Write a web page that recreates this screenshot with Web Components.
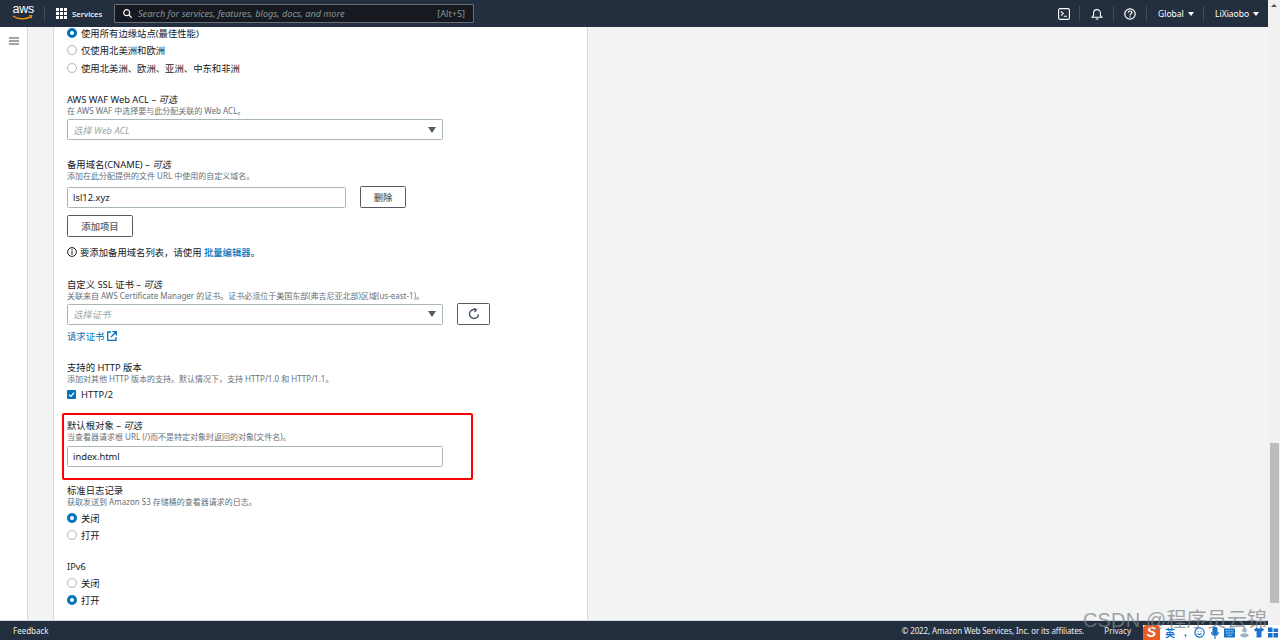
<!DOCTYPE html>
<html lang="zh">
<head>
<meta charset="utf-8">
<title>CloudFront</title>
<style>
    html, body {
        margin: 0;
        padding: 0;
        height: 640px;
        overflow: hidden;
        font-family: "Noto Sans", "Noto Sans CJK SC", sans-serif;
        font-size: 9.35px;
        color: #16191f;
    }
    body {
        display: flex;
        position: relative;
    }
</style>
</head>
<body>
<aws-console></aws-console>
<page-scrollbar></page-scrollbar>
<ime-overlay></ime-overlay>

<script>
const FONT = `"Noto Sans", "Noto Sans CJK SC", sans-serif`;

class AwsHeader extends HTMLElement {
    constructor() {
        super();
        this.attachShadow({ mode: 'open' }).innerHTML = `
            <style>
                :host {
                    display: flex;
                    align-items: center;
                    height: 27px;
                    flex: none;
                    background: #232f3e;
                    color: #fff;
                    font-family: ${FONT};
                    font-size: 8.5px;
                }
                .logo { position: relative; width: 44px; height: 27px; flex: none; }
                .logo span {
                    position: absolute; left: 12.5px; top: 2px;
                    font: 400 12.5px/15px "Liberation Sans", sans-serif;
                    letter-spacing: -0.3px;
                }
                .logo svg { position: absolute; left: 12px; top: 15px; }
                .div { width: 1px; height: 15px; background: #414d5c; flex: none; }
                .services { display: flex; align-items: center; gap: 5px; margin-left: 11px; width: 57px; flex: none; font-size: 7.8px; font-weight: 500; }
                .search {
                    width: 360px; height: 19px; box-sizing: border-box; flex: none;
                    margin-left: 1px;
                    display: flex; align-items: center;
                    background: #16191f; border: 1px solid #687078; border-radius: 1px;
                    padding: 0 8px 0 8px;
                    color: #879596; font-size: 9.15px; font-style: italic;
                }
                .search svg { margin-right: 6px; flex: none; }
                .search span { flex: 1; }
                .search b { font-weight: 400; font-style: normal; }
                .right { margin-left: auto; display: flex; align-items: center; height: 27px; }
                .ic { width: 33px; display: flex; justify-content: center; box-sizing: border-box; }
                .menu { display: flex; align-items: center; gap: 4px; box-sizing: border-box; padding-left: 11px; }
                .caret { width: 0; height: 0; border: 3px solid transparent; border-top: 4px solid #fff; border-bottom: 0; }
            </style>
            <div class="logo">
                <span>aws</span>
                <svg width="22" height="6" viewBox="0 0 22 6" fill="none">
                    <path d="M1 1C6 4.6 14 4.6 19 1.6" stroke="#f90" stroke-width="1.3"/>
                    <path d="M17 .8l3-.3-.8 3" stroke="#f90" stroke-width="1"/>
                </svg>
            </div>
            <div class="div"></div>
            <div class="services">
                <svg width="11" height="11" viewBox="0 0 11 11" fill="#fff">
                    <path d="M0 0h3v3H0zM4 0h3v3H4zM8 0h3v3H8zM0 4h3v3H0zM4 4h3v3H4zM8 4h3v3H8zM0 8h3v3H0zM4 8h3v3H4zM8 8h3v3H8z"/>
                </svg>
                <span>Services</span>
            </div>
            <div class="search">
                <svg width="9" height="9" viewBox="0 0 9 9" fill="none" stroke="#fff" stroke-width="1.2">
                    <circle cx="3.7" cy="3.7" r="3"/><path d="M6 6l2.8 2.8"/>
                </svg>
                <span>Search for services, features, blogs, docs, and more</span>
                <b>[Alt+S]</b>
            </div>
            <div class="right">
                <div class="ic" style="padding-left:2px">
                    <svg width="12" height="12" viewBox="0 0 12 12" fill="none" stroke="#fff" stroke-width="1.1">
                        <rect x=".6" y=".6" width="10.8" height="10.8" rx="1.5"/>
                        <path d="M3 3.5L5.3 5.6 3 7.7M5.8 8.2h3"/>
                    </svg>
                </div>
                <div class="div"></div>
                <div class="ic">
                    <svg width="12" height="12" viewBox="0 0 12 12" fill="none" stroke="#fff" stroke-width="1.1">
                        <path d="M1 9.3h10L9.4 7.3V5a3.4 3.4 0 0 0-6.8 0v2.3zM4.8 10.6c.6.8 1.8.8 2.4 0"/>
                    </svg>
                </div>
                <div class="div"></div>
                <div class="ic" style="width:32px">
                    <svg width="12" height="12" viewBox="0 0 12 12" fill="none" stroke="#fff" stroke-width="1.2">
                        <circle cx="6" cy="6" r="5.2"/>
                        <path d="M4.2 4.6C4.3 2.4 7.9 2.5 7.9 4.5 7.9 5.9 6 5.8 6 7.5M6 8.2v1.3"/>
                    </svg>
                </div>
                <div class="div"></div>
                <div class="menu" style="width:56px">Global <i class="caret"></i></div>
                <div class="div"></div>
                <div class="menu" style="width:64px">LiXiaobo <i class="caret"></i></div>
            </div>
        `;
    }
}

class AwsFooter extends HTMLElement {
    constructor() {
        super();
        this.attachShadow({ mode: 'open' }).innerHTML = `
            <style>
                :host {
                    display: flex;
                    align-items: center;
                    justify-content: space-between;
                    height: 19px;
                    flex: none;
                    background: #232f3e;
                    color: #eaeded;
                    font-family: ${FONT};
                    font-size: 8px;
                    padding: 0 137px 0 13px;
                    border-top: 1px solid #d5dbdb;
                }
                .r { display: flex; gap: 20px; }
                .c { letter-spacing: -0.11px; }
            </style>
            <span>Feedback</span>
            <div class="r"><span class="c">© 2022, Amazon Web Services, Inc. or its affiliates.</span><span>Privacy</span></div>
        `;
    }
}

class SideNav extends HTMLElement {
    constructor() {
        super();
        this.attachShadow({ mode: 'open' }).innerHTML = `
            <style>
                :host {
                    display: block;
                    width: 27px;
                    flex: none;
                    background: #fff;
                    border-right: 1px solid #d5dbdb;
                    box-sizing: content-box;
                }
                svg { display: block; margin: 10px 0 0 9px; }
            </style>
            <svg width="10" height="8" viewBox="0 0 10 8" fill="none" stroke="#414d5c" stroke-width="1.2">
                <path d="M0 1h10M0 4h10M0 7h10"/>
            </svg>
        `;
    }
}

class FormField extends HTMLElement {
    constructor() {
        super();
        this.attachShadow({ mode: 'open' }).innerHTML = `
            <style>
                :host { display: block; }
                .label { line-height: 11px; height: 11px; color: #16191f; white-space: nowrap; }
                .label i { font-style: italic; }
                .desc { line-height: 12px; height: 12px; font-size: 8px; color: #687078; white-space: nowrap; }
                .desc:empty { display: none; }
                .body { margin-top: var(--control-gap, 2px); }
            </style>
            <div class="label"></div>
            <div class="desc"></div>
            <div class="body"><slot></slot></div>
        `;
    }

    connectedCallback() {
        const label = this.shadowRoot.querySelector('.label');
        label.textContent = this.getAttribute('label');
        if (this.hasAttribute('optional')) {
            const opt = document.createElement('i');
            opt.textContent = '可选';
            label.append(' – ', opt);
        }
        this.shadowRoot.querySelector('.desc').textContent = this.getAttribute('desc') || '';
    }
}

class RadioRow extends HTMLElement {
    constructor() {
        super();
        this.attachShadow({ mode: 'open' }).innerHTML = `
            <style>
                :host {
                    display: flex;
                    align-items: center;
                    gap: 4px;
                    height: 17.4px;
                    color: #16191f;
                    white-space: nowrap;
                }
                .dot {
                    width: 10px; height: 10px; border-radius: 50%; flex: none;
                    box-sizing: border-box; background: #fff;
                    border: 1px solid #aab7b8;
                }
                :host([checked]) .dot { border: 3.2px solid #0073bb; }
            </style>
            <span class="dot"></span><slot></slot>
        `;
    }
}

class CheckRow extends HTMLElement {
    constructor() {
        super();
        this.attachShadow({ mode: 'open' }).innerHTML = `
            <style>
                :host { display: flex; align-items: center; gap: 5px; height: 14px; }
                svg { flex: none; }
            </style>
            <svg width="9" height="9" viewBox="0 0 9 9">
                <rect width="9" height="9" rx="1" fill="#0073bb"/>
                <path d="M2 4.6l1.8 1.8L7 2.8" fill="none" stroke="#fff" stroke-width="1.3"/>
            </svg>
            <slot></slot>
        `;
    }
}

class TextBox extends HTMLElement {
    constructor() {
        super();
        this.attachShadow({ mode: 'open' }).innerHTML = `
            <style>
                :host {
                    display: flex;
                    align-items: center;
                    box-sizing: border-box;
                    width: var(--box-width, 376px);
                    height: 21px;
                    flex: none;
                    background: #fff;
                    border: 1px solid #aab7b8;
                    border-radius: 1.5px;
                    padding: 0 5px;
                    color: #16191f;
                }
                :host([placeholder]) { color: #9aa8a9; font-style: italic; }
                .caret { display: none; margin-left: auto; margin-right: 1px; width: 0; height: 0; border: 4.5px solid transparent; border-top: 6px solid #545b64; border-bottom: 0; }
                :host([select]) .caret { display: block; }
            </style>
            <slot></slot>
            <i class="caret"></i>
        `;
    }
}

class AwsButton extends HTMLElement {
    constructor() {
        super();
        this.attachShadow({ mode: 'open' }).innerHTML = `
            <style>
                :host {
                    display: flex;
                    align-items: center;
                    justify-content: center;
                    box-sizing: border-box;
                    height: 22px;
                    flex: none;
                    background: #fff;
                    border: 1px solid #545b64;
                    border-radius: 1.5px;
                    color: #545b64;
                    font-weight: 500;
                }
            </style>
            <slot></slot>
        `;
    }
}

class FormPanel extends HTMLElement {
    constructor() {
        super();
        this.attachShadow({ mode: 'open' }).innerHTML = `
            <style>
                :host {
                    display: block;
                    width: 535px;
                    flex: none;
                    box-sizing: border-box;
                    margin-left: 25px;
                    background: #fff;
                    border-left: 1px solid #d5dbdb;
                    border-right: 1px solid #d5dbdb;
                    padding: 0 0 0 13px;
                    overflow: hidden;
                    font-size: 9.35px;
                    font-family: ${FONT};
                }
                .inner { margin-top: -2.8px; }
                .row { display: flex; gap: 14px; align-items: center; }
                form-field { margin-top: 18px; }
                .note { display: flex; align-items: center; gap: 3px; height: 14px; margin-top: 8px; }
                .link { color: #0073bb; font-weight: 500; }
                .req { display: flex; align-items: center; gap: 3px; height: 14px; margin-top: 4px; color: #0073bb; }
                .red {
                    box-sizing: border-box; width: 411px; height: 67px;
                    margin: 12px 0 0 -5px; padding: 5px 0 0 3px;
                    border: 2px solid #f00; border-radius: 2px;
                }
                .red form-field { margin: 0; }
            </style>
            <div class="inner">
                <radio-row checked>使用所有边缘站点(最佳性能)</radio-row>
                <radio-row>仅使用北美洲和欧洲</radio-row>
                <radio-row>使用北美洲、欧洲、亚洲、中东和非洲</radio-row>

                <form-field label="AWS WAF Web ACL" optional desc="在 AWS WAF 中选择要与此分配关联的 Web ACL。">
                    <text-box select placeholder>选择 Web ACL</text-box>
                </form-field>

                <form-field label="备用域名(CNAME)" optional desc="添加在此分配提供的文件 URL 中使用的自定义域名。" style="margin-top:19px;--control-gap:4px">
                    <div class="row">
                        <text-box style="--box-width:279px">lsl12.xyz</text-box>
                        <aws-button style="width:46px">删除</aws-button>
                    </div>
                    <aws-button style="width:66px;margin-top:7px">添加项目</aws-button>
                    <div class="note">
                        <svg width="10" height="10" viewBox="0 0 10 10" fill="none" stroke="#16191f">
                            <circle cx="5" cy="5" r="4.4" stroke-width="1"/>
                            <path d="M5 4.2V7.6M5 2.2v1.2" stroke-width="1.1"/>
                        </svg>
                        <span>要添加备用域名列表，请使用 <span class="link">批量编辑器</span>。</span>
                    </div>
                </form-field>

                <form-field label="自定义 SSL 证书" optional desc="关联来自 AWS Certificate Manager 的证书。证书必须位于美国东部(弗吉尼亚北部)区域(us-east-1)。" style="margin-top:20px;--control-gap:1px">
                    <div class="row">
                        <text-box select placeholder>选择证书</text-box>
                        <aws-button style="width:33px">
                            <svg width="12" height="12" viewBox="0 0 11 11" fill="none" stroke="#414d5c" stroke-width="1.2">
                                <path d="M9.6 5.8A4.1 4.1 0 1 1 6.8 1.6"/><path d="M5.6 .3l2.2 1.5L5.9 3.8"/>
                            </svg>
                        </aws-button>
                    </div>
                    <div class="req">请求证书
                        <svg width="10" height="10" viewBox="0 0 10 10" fill="none" stroke="#0073bb" stroke-width="1.3">
                            <path d="M4 1H.7v8.3H9V6M5.5.7h3.8v3.8M9.2.8L4 6"/>
                        </svg>
                    </div>
                </form-field>

                <form-field label="支持的 HTTP 版本" desc="添加对其他 HTTP 版本的支持。默认情况下，支持 HTTP/1.0 和 HTTP/1.1。" style="margin-top:19px">
                    <check-row>HTTP/2</check-row>
                </form-field>

                <div class="red">
                    <form-field label="默认根对象" optional desc="当查看器请求根 URL (/)而不是特定对象时返回的对象(文件名)。" style="--control-gap:3px">
                        <text-box>index.html</text-box>
                    </form-field>
                </div>

                <form-field label="标准日志记录" desc="获取发送到 Amazon S3 存储桶的查看器请求的日志。" style="margin-top:5px;--control-gap:1px">
                    <radio-row checked>关闭</radio-row>
                    <radio-row>打开</radio-row>
                </form-field>

                <form-field label="IPv6" style="margin-top:17px">
                    <radio-row>关闭</radio-row>
                    <radio-row checked>打开</radio-row>
                </form-field>
            </div>
        `;
    }
}

class AwsConsole extends HTMLElement {
    constructor() {
        super();
        this.attachShadow({ mode: 'open' }).innerHTML = `
            <style>
                :host {
                    display: flex;
                    flex-direction: column;
                    flex: 1;
                    min-width: 0;
                    height: 640px;
                    background: #f2f3f3;
                }
                main { display: flex; flex: 1; min-height: 0; }
            </style>
            <aws-header></aws-header>
            <main>
                <side-nav></side-nav>
                <form-panel></form-panel>
            </main>
            <aws-footer></aws-footer>
        `;
    }
}

class PageScrollbar extends HTMLElement {
    constructor() {
        super();
        this.attachShadow({ mode: 'open' }).innerHTML = `
            <style>
                :host {
                    display: block;
                    position: relative;
                    width: 12px;
                    flex: none;
                    height: 640px;
                    background: #f1f1f1;
                }
                .up { position: absolute; left: 3px; top: 4px; width: 0; height: 0; border: 3px solid transparent; border-bottom: 3px solid #505050; border-top: 0; }
                .thumb { position: absolute; left: 2px; right: 1px; top: 443px; height: 160px; background: #bcbcbc; }
            </style>
            <i class="up"></i><div class="thumb"></div>
        `;
    }
}

class ImeOverlay extends HTMLElement {
    constructor() {
        super();
        this.attachShadow({ mode: 'open' }).innerHTML = `
            <style>
                :host {
                    position: absolute;
                    left: 0; top: 0; width: 1280px; height: 640px;
                    pointer-events: none;
                    overflow: hidden;
                }
                .mark {
                    position: absolute; left: 1083px; top: 608px;
                    font: 400 20px/24px "Liberation Sans", "Noto Sans CJK SC", sans-serif;
                    letter-spacing: .15px;
                    color: rgba(125,130,135,.72);
                    white-space: nowrap;
                    z-index: 1;
                }
                .bar {
                    position: absolute; left: 1143px; top: 625px; width: 137px; height: 15px;
                    display: flex; align-items: center;
                    background: #fff;
                }
                .s {
                    width: 17px; height: 15px; background: #ef5a24; border-radius: 4px 4px 0 0;
                    color: #fff; font: italic 700 14px/15px "Liberation Sans", sans-serif; text-align: center;
                    flex: none;
                }
                .en { color: #1a73c8; font: 700 10px/15px "Noto Sans CJK SC", sans-serif; margin-left: 5px; }
                .comma { color: #1a73c8; font: 700 10px/13px "Liberation Sans", sans-serif; margin-left: 9px; width: 3px; }
                svg { flex: none; }
            </style>
            <div class="mark">CSDN @程序员云锦</div>
            <div class="bar">
                <div class="s">S</div>
                <span class="en">英</span>
                <span class="comma">,</span>
                <svg style="margin-left:7px" width="11" height="11" viewBox="0 0 11 11" fill="none" stroke="#1a73c8" stroke-width="1.2">
                    <circle cx="5.5" cy="5.5" r="4.6"/><path d="M3.4 6.6c1 1.2 3.2 1.2 4.2 0M3.8 4v.6M7.2 4v.6"/>
                </svg>
                <svg style="margin-left:6px" width="8" height="12" viewBox="0 0 8 12" fill="none" stroke="#1a73c8" stroke-width="1.1">
                    <rect x="2" y="0" width="4" height="7.5" rx="2" fill="#1a73c8"/><path d="M.6 5c0 4.4 6.8 4.4 6.8 0M4 9v3"/>
                </svg>
                <svg style="margin-left:5px" width="11" height="10" viewBox="0 0 12 10">
                    <rect width="12" height="10" rx="1" fill="#1a73c8"/>
                    <path d="M2 2.5h8M2 5h8M3.5 7.5h5" stroke="#fff" stroke-dasharray="1 .8"/>
                </svg>
                <svg style="margin-left:5px" width="9" height="11" viewBox="0 0 10 11" fill="#9fb4c9">
                    <circle cx="5" cy="3" r="2.6"/><ellipse cx="5" cy="8.6" rx="4.6" ry="2.4"/>
                </svg>
                <svg style="margin-left:5px" width="10" height="11" viewBox="0 0 11 11" fill="#1a73c8">
                    <path d="M3.4 0L0 2l1.4 2.4 1.4-.6V11h5.4V3.8l1.4.6L11 2 7.6 0C7 1.4 4 1.4 3.4 0z"/>
                </svg>
                <svg style="margin-left:4px" width="10" height="11" viewBox="0 0 11 11" fill="#1a73c8">
                    <path d="M0 0h5v5H0zM6 1h5v4H6zM0 6h5v5H0zM6 6h5v5H6z"/>
                </svg>
            </div>
        `;
    }
}

customElements.define('aws-header', AwsHeader);
customElements.define('aws-footer', AwsFooter);
customElements.define('side-nav', SideNav);
customElements.define('form-field', FormField);
customElements.define('radio-row', RadioRow);
customElements.define('check-row', CheckRow);
customElements.define('text-box', TextBox);
customElements.define('aws-button', AwsButton);
customElements.define('form-panel', FormPanel);
customElements.define('aws-console', AwsConsole);
customElements.define('page-scrollbar', PageScrollbar);
customElements.define('ime-overlay', ImeOverlay);
</script>
</body>
</html>
